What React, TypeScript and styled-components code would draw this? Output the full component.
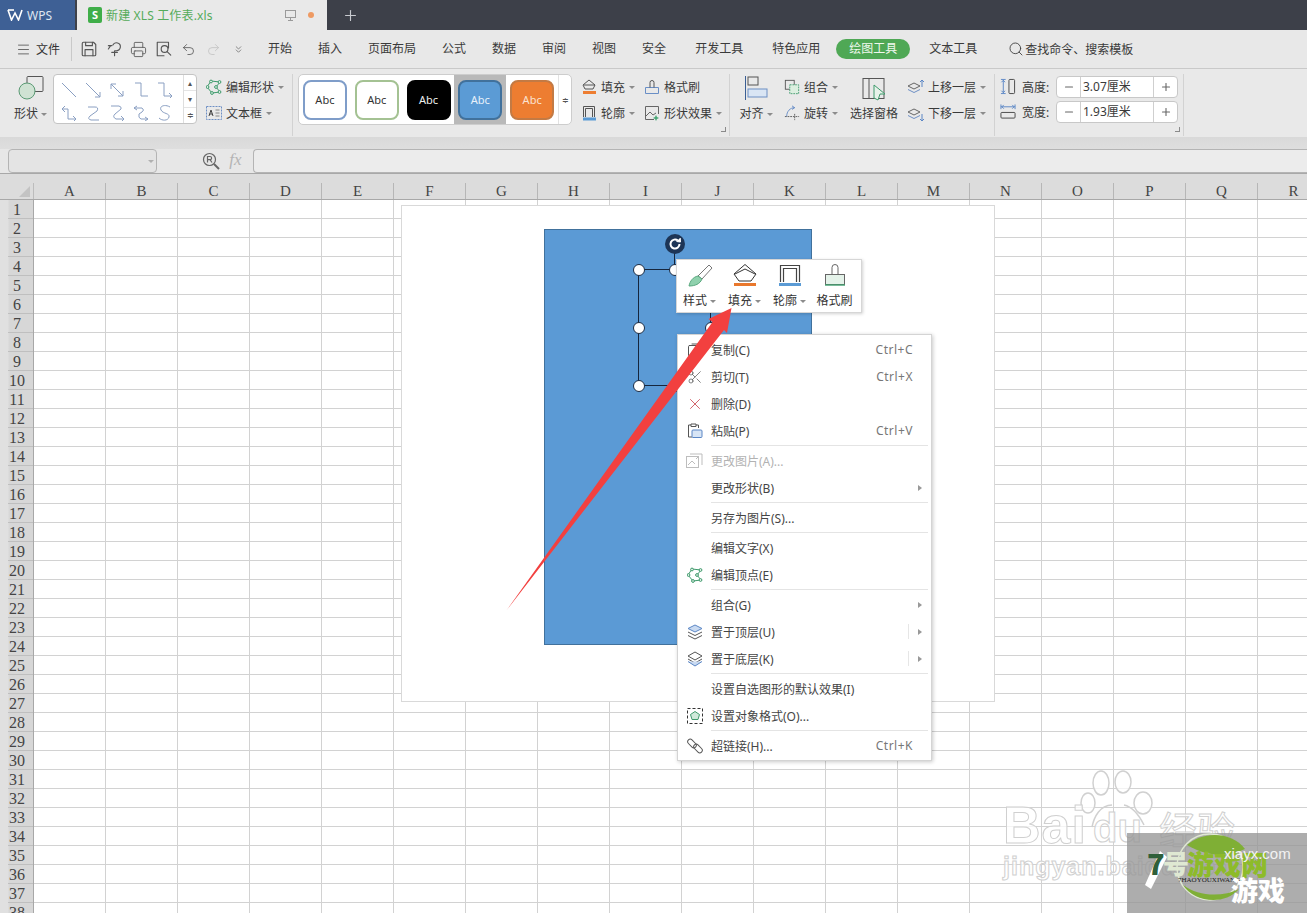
import React from "react";
import styled, { createGlobalStyle } from "styled-components";
import { Menu as MenuIcon, Plus, Minus, Printer, Undo2, Redo2, ChevronsDown, Search, Scissors, X } from "lucide-react";

const Global = createGlobalStyle`
  html, body { margin: 0; padding: 0; background: #fff; }
  body { font-family: "Noto Sans", "Noto Sans CJK SC", sans-serif; font-size: 12px; color: #3a3a3a; }
  * { box-sizing: border-box; }
  svg { flex: none; }
`;

const App0 = styled.div`
  width: 1307px; height: 913px; overflow: hidden; display: flex; flex-direction: column; position: relative;
`;

/* ---------- Title / tab bar ---------- */
const TabBar = styled.div`
  height: 30px; flex: none; background: #3d4049; display: flex; align-items: stretch;
`;
const WpsTab = styled.div`
  width: 75px; background: #3e6095; color: #dfe6f0; display: flex; align-items: center; gap: 4px; padding-left: 7px; font-size: 12px;
`;
const DocTab = styled.div`
  width: 250px; margin-left: 2px; background: #e9e9e9; display: flex; align-items: center; padding-left: 11px; position: relative;
`;
const SheetBadge = styled.span`
  width: 14px; height: 16px; border-radius: 2px; background: #3fae49; color: #fff; font-size: 11px; line-height: 16px; text-align: center; font-weight: 700; margin-right: 4px;
`;
const DocName = styled.span`
  color: #55ab5a; font-size: 12px; flex: 1; letter-spacing: 0.15px;
`;
const TabDot = styled.span`
  width: 6px; height: 6px; border-radius: 50%; background: #ee9a63; margin: 0 13px 0 11px;
`;
const NewTab = styled.div`
  margin-left: 15px; display: flex; align-items: center; color: #c9cbd0;
`;

/* ---------- Menu row ---------- */
const MenuRow = styled.div`
  height: 39px; flex: none; background: #e8e8e8; border-bottom: 1px solid #c9c9c9; display: flex; align-items: center; padding-left: 16px;
`;
const FileBtn = styled.div`
  display: flex; align-items: center; gap: 5px; width: 55px; height: 38px; font-size: 12px; color: #333;
`;
const MenuDivider = styled.div`
  width: 1px; height: 24px; background: #c9c9c9; margin-right: 4px;
`;
const QuickSlot = styled.div<{ $dim?: boolean }>`
  width: 25px; display: flex; justify-content: center; align-items: center; color: ${(p) => (p.$dim ? "#c2c2c2" : "#555")};
`;
const MenuTab = styled.div<{ $pad?: number }>`
  padding: 0 ${(p) => p.$pad ?? 13}px; color: #3a3a3a; font-size: 12px; line-height: 38px; white-space: nowrap;
`;
const ActiveTab = styled.div`
  margin-left: 3px; width: 74px; height: 20px; border-radius: 10px; background: #4fa855; color: #f0f8ee; font-size: 12px; line-height: 20px; text-align: center;
`;
const SearchBox = styled.div`
  display: flex; align-items: center; margin-left: 12px; gap: 1px; font-size: 12px; color: #3a3a3a;
`;
const QuickGap = styled.div`
  width: 4px;
`;

/* ---------- Ribbon ---------- */
const Ribbon = styled.div`
  height: 68px; flex: none; background: #e9e9e9; display: flex; padding: 5px 0 0 8px; align-items: flex-start;
`;
const BigBtn = styled.div<{ $w: number }>`
  width: ${(p) => p.$w}px; height: 52px; display: flex; flex-direction: column; align-items: center; color: #3a3a3a; flex: none;
`;
const BigIcon = styled.div`
  height: 29px; display: flex; align-items: flex-end; justify-content: center;
`;
const BigLabel = styled.div`
  display: flex; align-items: center; height: 24px; line-height: 24px; white-space: nowrap; margin-top: 1px;
`;
const Caret = styled.span`
  display: inline-block; width: 0; height: 0; border-left: 3px solid transparent; border-right: 3px solid transparent; border-top: 3px solid #8c8c8c; margin-left: 3px; flex: none;
`;
const CmdCaret = styled(Caret)`
  margin-left: 0;
`;
const Gallery = styled.div`
  width: 144px; height: 50px; background: #fff; border: 1px solid #c4c4c4; border-radius: 4px; display: flex; flex: none;
`;
const LineGrid = styled.div`
  flex: 1; display: grid; grid-template-columns: repeat(5, 24px); grid-auto-rows: 23px; padding: 3px 0 0 3px; justify-items: center; align-items: center;
`;
const ScrollCol = styled.div`
  width: 13px; border-left: 1px solid #dedede; display: flex; flex-direction: column; color: #555;
`;
const ScrollCell = styled.div`
  flex: 1; display: flex; align-items: center; justify-content: center; font-size: 8px; line-height: 1; border-bottom: 1px solid #e4e4e4;
  &:last-child { border-bottom: 0; }
`;
const Col = styled.div<{ $w: number; $pl?: number }>`
  width: ${(p) => p.$w}px; padding-left: ${(p) => p.$pl ?? 0}px; flex: none; display: flex; flex-direction: column;
`;
const CmdRow = styled.div`
  height: 26px; display: flex; align-items: center; gap: 4px; white-space: nowrap; color: #3a3a3a;
`;
const GroupDivider = styled.div`
  width: 1px; height: 62px; background: #d2d2d2; flex: none; position: relative;
`;
const Launcher = styled.span`
  position: absolute; left: -8px; top: 53px; width: 5px; height: 5px; border-right: 1px solid #8a8a8a; border-bottom: 1px solid #8a8a8a;
`;
const StyleGallery = styled.div`
  width: 274px; height: 51px; margin-left: 5px; background: #fff; border: 1px solid #cdcdcd; border-radius: 5px; display: flex; align-items: center; flex: none;
`;
const StyleSlot = styled.div<{ $on?: boolean }>`
  width: 52px; height: 49px; display: flex; align-items: center; justify-content: center; background: ${(p) => (p.$on ? "#b9b9b9" : "transparent")};
`;
const StyleChip = styled.div<{ $bg: string; $bd: string; $fg: string }>`
  width: 44px; height: 40px; border-radius: 8px; border: 2px solid ${(p) => p.$bd}; background: ${(p) => p.$bg}; color: ${(p) => p.$fg};
  font-size: 11px; line-height: 36px; text-align: center; font-family: "Noto Sans", sans-serif;
`;
const StyleScroll = styled.div`
  margin-left: auto; width: 13px; height: 49px; border-left: 1px solid #e2e2e2; display: flex; align-items: center; justify-content: center; color: #555; font-size: 8px;
`;
const SizeRow = styled.div`
  height: 25px; display: flex; align-items: center; color: #3a3a3a;
`;
const SizeLabel = styled.span`
  width: 40px; padding-left: 6px; white-space: nowrap;
`;
const Spinner = styled.div`
  width: 122px; height: 22px; background: #fff; border: 1px solid #c8c8c8; border-radius: 4px; display: flex; align-items: center;
`;
const SpinBtn = styled.div`
  width: 23px; height: 100%; display: flex; align-items: center; justify-content: center; color: #666;
`;
const SpinVal = styled.div`
  flex: 1; height: 100%; border-left: 1px solid #cfcfcf; border-right: 1px solid #cfcfcf; padding-left: 2px; line-height: 20px; color: #3a3a3a;
`;

/* ---------- Strip + formula bar ---------- */
const Strip = styled.div`
  height: 13px; flex: none; background: linear-gradient(#d9d9d9, #dedede); border-bottom: 1px solid #a9a9a9;
`;
const FormulaBar = styled.div`
  height: 24px; flex: none; background: #e7e7e7; display: flex; align-items: stretch; padding-left: 8px; margin-top: -1px; position: relative;
`;
const NameBox = styled.div`
  width: 149px; background: #e4e4e4; border: 1px solid #b4b4b4; border-radius: 4px; position: relative;
`;
const NameCaret = styled(Caret)`
  position: absolute; right: 2px; top: 10px; border-top-color: #b0b0b0;
`;
const ZoomSlot = styled.div`
  width: 22px; margin-left: 43px; display: flex; align-items: center; justify-content: center; color: #666;
`;
const Fx = styled.div`
  width: 31px; padding-right: 4px; text-align: center; font-family: "Liberation Serif", serif; font-style: italic; font-size: 17px; line-height: 22px; color: #b4b4b4;
`;
const FormulaInput = styled.div`
  flex: 1; background: #ececec; border: 1px solid #b4b4b4; border-right: 0; border-radius: 4px 0 0 4px;
`;

/* ---------- Sheet ---------- */
const Sheet = styled.div`
  flex: 1; position: relative; overflow: hidden; background: #fff; display: flex; flex-direction: column;
`;
const ColHead = styled.div`
  height: 27px; flex: none; display: flex; background: #dcdcdc; border-bottom: 1px solid #a8a8a8; border-top: 1px solid #a8a8a8; position: relative; align-items: flex-end;
`;
const Corner = styled.div`
  width: 34px; height: 16px; position: relative; flex: none; border-right: 1px solid #bcbcbc;
  &::after { content: ""; position: absolute; right: 3px; bottom: 2px; border-left: 11px solid transparent; border-bottom: 11px solid #c3c3c3; }
`;
const ColCell = styled.div`
  width: 72px; height: 16px; flex: none; border-right: 1px solid #b6b6b6; text-align: center; font-family: "Liberation Serif", serif; font-size: 15px; line-height: 16px; color: #444;
`;
const Body = styled.div`
  flex: 1; display: flex;
`;
const RowHead = styled.div`
  width: 34px; flex: none; background: linear-gradient(90deg, #e0e0e0 0, #e0e0e0 8px, #d7d7d7 9px); border-right: 1px solid #a8a8a8;
`;
const RowCell = styled.div`
  height: 19px; margin-left: 8px; padding-right: 7px; border-bottom: 1px solid #bfbfbf; font-family: "Liberation Serif", serif; font-size: 16px; line-height: 19px; text-align: center; color: #444;
`;
const Cells = styled.div`
  flex: 1;
  background-image:
    repeating-linear-gradient(90deg, transparent 0 71px, #d2d2d2 71px 72px),
    repeating-linear-gradient(180deg, transparent 0 18px, #d2d2d2 18px 19px);
`;

/* ---------- Free canvas: slide, shape, handles ---------- */
const Canvas = styled.div`
  position: absolute; left: 401px; top: 32px; width: 594px; height: 497px; background: #fff; border: 1px solid #d9d9d9;
`;
const BlueShape = styled.div`
  position: absolute; left: 142px; top: 23px; width: 268px; height: 416px; background: #5b9ad5; border: 1px solid #41719c;
`;
const Selection = styled.div`
  position: absolute; left: 93px; top: 39px; width: 73px; height: 117px; border: 1px solid #16263d;
`;
const Handle = styled.span<{ $x: number; $y: number }>`
  position: absolute; left: ${(p) => p.$x}px; top: ${(p) => p.$y}px; width: 12px; height: 12px; margin: -6px 0 0 -6px; border-radius: 50%; background: #fff; border: 1px solid #1b2c44;
`;
const RotStem = styled.span`
  position: absolute; left: 35px; top: -20px; width: 1px; height: 20px; background: #16263d;
`;
const RotHandle = styled.span`
  position: absolute; left: 26px; top: -36px; width: 20px; height: 20px; border-radius: 50%; background: #1d3556; display: flex; align-items: center; justify-content: center;
`;

/* ---------- Mini toolbar ---------- */
const MiniBar = styled.div`
  position: absolute; left: 676px; top: 86px; width: 186px; height: 54px; background: #fff; border: 1px solid #d6d6d6; box-shadow: 1px 1px 3px rgba(0,0,0,.18); display: flex;
`;
const MiniBtn = styled.div`
  width: 45px; display: flex; flex-direction: column; align-items: center; padding-top: 4px; color: #333; white-space: nowrap;
`;
const MiniLabel = styled.div`
  display: flex; align-items: center; height: 18px; margin-top: 4px; line-height: 18px;
`;

/* ---------- Context menu ---------- */
const ContextMenu = styled.div`
  position: absolute; left: 677px; top: 161px; width: 255px; height: 427px; background: #fff; border: 1px solid #d4d4d4; box-shadow: 1px 1px 4px rgba(0,0,0,.22); padding: 1px 0;
`;
const Item = styled.div<{ $off?: boolean }>`
  height: 27px; display: flex; align-items: center; color: ${(p) => (p.$off ? "#b2b2b2" : "#454545")}; position: relative; white-space: nowrap;
`;
const ItemIcon = styled.div`
  width: 33px; flex: none; display: flex; justify-content: center;
`;
const Shortcut = styled.span`
  position: absolute; right: 18px; color: #777; font-family: "Noto Sans", sans-serif; font-size: 12px; letter-spacing: 0.5px;
`;
const SubArrow = styled.span`
  position: absolute; right: 9px; top: 11px; border-top: 3px solid transparent; border-bottom: 3px solid transparent; border-left: 4px solid #999;
`;
const SplitLine = styled.span`
  position: absolute; right: 22px; top: 6px; width: 1px; height: 15px; background: #e6e6e6;
`;
const Sep = styled.div`
  height: 1px; margin: 1px 3px 1px 33px; background: #e4e4e4;
`;

/* ---------- Overlays ---------- */
const ArrowSvg = styled.svg`
  position: absolute; left: 500px; top: 127px;
`;
const Baidu = styled.div`
  position: absolute; left: 1003px; top: 600px; width: 240px; height: 140px; font-family: "Liberation Sans", sans-serif; color: rgba(255,255,255,.75); -webkit-text-stroke: 1px #d0d0d0;
`;
const BaiduWord = styled.span`
  position: absolute; left: 0; top: 22px; font-size: 52px; font-weight: 700; line-height: 60px; letter-spacing: 1px;
`;
const BaiduDu = styled.span`
  position: absolute; left: 90px; top: 30px; font-size: 40px; font-weight: 700; line-height: 50px;
`;
const BaiduCn = styled.span`
  position: absolute; left: 156px; top: 30px; font-family: "Noto Sans CJK SC", sans-serif; font-size: 38px; line-height: 50px; white-space: nowrap;
`;
const BaiduSub = styled.span`
  position: absolute; left: 0; top: 78px; font-size: 25px; line-height: 30px; font-weight: 700; white-space: nowrap; letter-spacing: 1px;
`;
const BaiduPaw = styled.svg`
  position: absolute; left: 73px; top: -4px;
`;
const Stamp = styled.div`
  position: absolute; left: 1127px; top: 660px; width: 180px; height: 80px; background: rgba(150,150,150,.78); overflow: hidden; font-family: "Noto Sans CJK SC", sans-serif;
`;
const StampArt = styled.svg`
  position: absolute; left: 0; top: 0;
`;
const Stamp7 = styled.span`
  position: absolute; left: 20px; top: 12px; font-size: 29px; line-height: 34px; font-weight: 900; color: #2f5f3a; white-space: nowrap;
`;
const StampHao = styled.span`
  position: absolute; left: 36px; top: 14px; font-size: 26px; line-height: 32px; font-weight: 900; color: #dfe8d2; white-space: nowrap;
`;
const StampGreen = styled.span`
  position: absolute; left: 60px; top: 16px; font-size: 27px; line-height: 30px; font-weight: 900; color: #8dbb2a; white-space: nowrap;
`;
const StampUrl = styled.span`
  position: absolute; left: 97px; top: 12px; font-family: "Liberation Sans", sans-serif; font-size: 15px; line-height: 18px; color: #f2f2f2; white-space: nowrap;
`;
const StampTiny = styled.span`
  position: absolute; left: 51px; top: 43px; font-family: "Liberation Serif", serif; font-size: 7px; line-height: 8px; color: #222; white-space: nowrap;
`;
const StampWhite = styled.span`
  position: absolute; left: 104px; top: 41px; font-size: 27px; line-height: 32px; font-weight: 900; color: #fff; white-space: nowrap;
`;

/* ---------- Icons (drawings) ---------- */
type S = { s?: number; children: React.ReactNode };
const Ic = ({ s = 16, children }: S) => (
  <svg width={s} height={s} viewBox="0 0 16 16" fill="none" stroke="#555" strokeWidth={1} strokeLinecap="round" strokeLinejoin="round">{children}</svg>
);
const WpsLogo = () => (
  <svg width="16" height="12" viewBox="0 0 16 12" fill="none" stroke="#fff" strokeWidth="1.6"><path d="M1 1l3.5 10L8 4l3.5 7L15 1" /><path d="M1 1h6" /></svg>
);
const Monitor = () => (
  <svg width="13" height="13" viewBox="0 0 13 13" fill="none" stroke="#9a9a9a"><rect x="1.5" y="1.5" width="10" height="7" /><path d="M6.5 8.5v3M4 11.5h5" /></svg>
);
const SaveI = () => <Ic s={18}><path d="M3 2h9l2 2v9a1 1 0 0 1-1 1H3a1 1 0 0 1-1-1V3a1 1 0 0 1 1-1z" /><path d="M5 2v3h6V2M4.500 14V8.500h7V14" /></Ic>;
const PasteQ = () => <Ic s={18}><path d="M7 4.500a3.500 3.500 0 1 1 3 5H8.500V14M3 5h3M3 8l2-3M6 11h5" /></Ic>;
const PreviewI = () => <Ic s={18}><path d="M12 7V2H2v12h6" /><circle cx="8.500" cy="8" r="3" /><path d="M11 10.500l3 3" /></Ic>;

const LG = ({ d }: { d: string }) => (
  <svg width="16" height="16" viewBox="0 0 16 16" fill="none" stroke="#8a9fc2" strokeWidth="1"><path d={d} /></svg>
);
const lineIcons = [
  "M1 1l14 14",
  "M1 1l14 14M15 10v5h-5",
  "M2 2l12 12M2 7V2h5M14 9v5H9",
  "M2 1h6v13h7",
  "M1 1h6v13h8M12 11l3 3-3 3",
  "M4 1L1 4h6v10h8M12 11l3 3-3 3M4 7L1 4",
  "M3 2h7q4 0 2 4L5 11q-3 3 1 4h8",
  "M2 1h8q3 1 2 3L6 9q-3 3 1 5h8M12 11l3 3-3 3",
  "M4 1L1 3l3 2M1 3h8q3 2 0 4L6 9q-1 4 2 5h7M12 12l3 2-3 2",
  "M13 2C8-1 2 1 4 5s9 3 8 7-7 4-10 1",
];

const ShapeI = () => (
  <svg width="28" height="26" viewBox="0 0 28 26" fill="none">
    <rect x="10" y="1.500" width="16" height="15" rx="1" stroke="#555" />
    <circle cx="10" cy="16" r="8" fill="#cfe2d3" stroke="#5a9a74" />
  </svg>
);
const EditShapeI = ({ s = 16 }: { s?: number }) => (
  <svg width={s} height={s} viewBox="0 0 16 16" fill="none" stroke="#3f9a6c"><path d="M5 2l9 1-4 5 4 5-8 1-5-6z" /><g fill="#e9f5ee"><circle cx="5" cy="2.500" r="1.400" /><circle cx="13.500" cy="3" r="1.400" /><circle cx="10" cy="8" r="1.400" /><circle cx="13.500" cy="13" r="1.400" /><circle cx="6" cy="14" r="1.400" /><circle cx="1.500" cy="8" r="1.400" /></g></svg>
);
const TextBoxI = () => (
  <svg width="16" height="16" viewBox="0 0 16 16" fill="none" stroke="#6d8fc4"><rect x=".5" y="1.500" width="15" height="13" strokeDasharray="2 1" /><path d="M3 11l2-6 2 6M3.700 9h2.600" stroke="#444" /><path d="M9.500 5h4M9.500 8h4M9.500 11h4" stroke="#888" /></svg>
);
const FillI = () => <svg width="16" height="16" viewBox="0 0 16 16" fill="none" stroke="#555"><path d="M8 1l6 5-2 4H4L2 6z" /><path d="M3 6h11" /><rect x="2" y="12" width="13" height="3" fill="#ed7d31" stroke="none" /></svg>;
const OutlineI = () => <svg width="16" height="16" viewBox="0 0 16 16" fill="none" stroke="#555"><path d="M2.500 12V1.500h11V12M4.500 12V3.500h7V12" /><rect x="2" y="12.500" width="13" height="3" fill="#5b9bd5" stroke="none" /></svg>;
const PainterI = () => <svg width="16" height="16" viewBox="0 0 16 16" fill="none" stroke="#6a8fc6"><path d="M1.500 8.500h13v6h-13z" /><path d="M6 8.500v-5a2 2 0 0 1 4 0v5" stroke="#555" /></svg>;
const EffectI = () => <svg width="16" height="16" viewBox="0 0 16 16" fill="none" stroke="#666"><path d="M10 14.500H1.500v-13h13V9" /><path d="M2 11l4-4 3 3 3-2" /><path d="M12 10l1 2 2 1-2 1-1 2-1-2-2-1 2-1z" fill="#4aa877" stroke="none" /></svg>;
const GroupI = () => <svg width="16" height="16" viewBox="0 0 18 18" fill="none" stroke="#555"><rect x="1.500" y="1.500" width="10" height="10" /><rect x="6.500" y="6.500" width="10" height="10" fill="#dcefe0" stroke="#3f9a6c" strokeDasharray="2 1" /></svg>;
const RotateI = () => <svg width="16" height="16" viewBox="0 0 18 18" fill="none" stroke="#5f87c4"><path d="M3 13C3 7 7 3 12 3M9 1l3 2-3 2" /><path d="M1 13h16M12 10v7" stroke="#555" strokeDasharray="2 1" /></svg>;
const AlignI = () => <svg width="24" height="26" viewBox="0 0 24 26" fill="none" stroke="#555"><path d="M1.500 1v24" stroke="#3b5f94" /><rect x="4" y="2" width="10" height="8" /><rect x="4" y="14" width="19" height="8" fill="#d9e5f4" stroke="#6d8fc4" /></svg>;
const PaneI = () => <svg width="25" height="24" viewBox="0 0 25 24" fill="none" stroke="#555"><rect x="1" y="1.500" width="21" height="20" /><path d="M7 1.500v20" /><path d="M12 8l11 9h-5l-2 6-4-2z" fill="#e7f2ea" stroke="#3f9a6c" /></svg>;
const LayerI = ({ up }: { up?: boolean }) => (
  <svg width="17" height="17" viewBox="0 0 17 17" fill="none" stroke="#666"><path d="M1 7l6-3 6 3-6 3z" /><path d="M1 10.500l6 3 6-3" stroke="#6d8fc4" />{up ? <path d="M15 8V1M13 3l2-2 2 2" stroke="#5b86c5" /> : <path d="M15 9v7M13 14l2 2 2-2" stroke="#5b86c5" />}</svg>
);
const HeightI = () => <svg width="16" height="17" viewBox="0 0 17 17" fill="none"><path d="M3.500 1.500v14M1 1h5M1 16h5M1.500 4l2-2 2 2M1.500 13l2 2 2-2" stroke="#5b86c5" /><rect x="9.500" y="1" width="6" height="15" rx="1" stroke="#444" /></svg>;
const WidthI = () => <svg width="16" height="17" viewBox="0 0 17 17" fill="none"><path d="M1 3.500h15M1 1v5M16 1v5M4 1.500l-2 2 2 2M13 1.500l2 2-2 2" stroke="#5b86c5" /><rect x="1" y="9.500" width="15" height="6" rx="1" stroke="#444" /></svg>;
const FindZoom = () => <svg width="18" height="18" viewBox="0 0 18 18" fill="none" stroke="#666" strokeWidth="1.200"><circle cx="7.500" cy="7.500" r="6" /><path d="M12 12l5 5" strokeWidth="2" /><path d="M5.500 10.500v-6h2.500a1.600 1.600 0 0 1 0 3.200H5.500M8 7.700l2 2.800" /></svg>;

/* mini toolbar */
const BrushBig = () => <svg width="28" height="24" viewBox="0 0 28 24" fill="none"><path d="M23 1l3 3-10 11-4-3z" stroke="#777" fill="#fff" /><path d="M12 12c-5 1-8 5-9 10 6 0 11-2 13-7z" fill="#8fd1ad" stroke="#59a87e" /></svg>;
const FillBig = () => <svg width="26" height="24" viewBox="0 0 26 24" fill="none" stroke="#333"><path d="M13 .5L24 10l-5 7H7l-5-7z" /><path d="M3 10l10-5 10 5" /><rect x="2" y="19" width="22" height="3" fill="#e9782d" stroke="none" /></svg>;
const OutlineBig = () => <svg width="26" height="24" viewBox="0 0 26 24" fill="none" stroke="#444" strokeWidth="1.200"><path d="M3.500 18V1.500h19V18M6.500 18V4.500h13V18" /><rect x="2" y="19" width="22" height="3" fill="#5b9bd5" stroke="none" /></svg>;
const PainterBig = () => <svg width="24" height="24" viewBox="0 0 24 24" fill="none"><rect x="2.500" y="10.500" width="19" height="10" fill="#e4f2e9" stroke="#666" /><path d="M9 10.500v-7a3 3 0 0 1 6 0v7" stroke="#666" /><path d="M2 21h20" stroke="#3fa06f" strokeWidth="1.400" /></svg>;

/* context menu */
const CopyI = () => <Ic><rect x="1.500" y="3.500" width="9" height="11" rx="1" /><path d="M5 2h7l2 2v9" /></Ic>;
const PasteI = () => <svg width="16" height="16" viewBox="0 0 16 16" fill="none" stroke="#555"><path d="M4 2H1.500v12H5M9 2h2.500v3M4 1h5v2.500H4z" /><rect x="5" y="7" width="10" height="7.500" rx="1" fill="#d8e5f5" stroke="#5b86c5" /></svg>;
const ChangePic = () => <svg width="17" height="17" viewBox="0 0 17 17" fill="none" stroke="#bdbdbd"><rect x=".5" y="4.500" width="12" height="11" /><path d="M4 2h12v11M2 13l4-4 3 3M10 7l3-3" /></svg>;
const LayerTop = () => <svg width="16" height="16" viewBox="0 0 16 16" fill="none" stroke="#555"><path d="M8 1l7 3.500L8 8 1 4.500z" fill="#c9daf1" stroke="#5b86c5" /><path d="M1 8l7 3.500L15 8M1 11.500L8 15l7-3.500" /></svg>;
const LayerBottom = () => <svg width="16" height="16" viewBox="0 0 16 16" fill="none" stroke="#555"><path d="M8 1l7 4-7 4-7-4z" /><path d="M1 8l7 4 7-4" /><path d="M1 10.500L8 15l7-4.500" stroke="#5b86c5" fill="#c9daf1" /></svg>;
const FormatI = () => <svg width="16" height="16" viewBox="0 0 16 16" fill="none"><rect x=".5" y=".5" width="15" height="15" stroke="#333" strokeDasharray="3 2" /><path d="M8 3.500l4.500 3-1.500 5H5l-1.500-5z" fill="#cfe9da" stroke="#3f9a6c" /></svg>;
const LinkI = () => <svg width="16" height="16" viewBox="0 0 16 16" fill="none" stroke="#555"><rect x="0" y="3" width="10" height="5" rx="2.500" transform="rotate(45 5 5.500)" /><rect x="6" y="8" width="10" height="5" rx="2.500" transform="rotate(45 11 10.500)" /></svg>;
const RotateMark = () => <svg width="14" height="14" viewBox="0 0 14 14" fill="none" stroke="#fff" strokeWidth="2"><path d="M11.500 7a4.500 4.500 0 1 1-1.600-3.400" /><path d="M8.500 4.500L12.500 5l-.3-4" fill="#fff" strokeWidth="1" /></svg>;

const cols = "ABCDEFGHIJKLMNOPQR".split("");
const rows = Array.from({ length: 38 }, (_, i) => i + 1);
const chips = [
  { bg: "#fff", bd: "#7f9dc9", fg: "#333" },
  { bg: "#fff", bd: "#a4c293", fg: "#333" },
  { bg: "#000", bd: "#000", fg: "#eee" },
  { bg: "#5b9bd5", bd: "#41719c", fg: "#e8f1fa", on: true },
  { bg: "#ed7d31", bd: "#c37a44", fg: "#fbe3d2" },
];

const Cmd = ({ icon, label, caret = true }: { icon: React.ReactNode; label: string; caret?: boolean }) => (
  <CmdRow>{icon}<span>{label}</span>{caret && <CmdCaret />}</CmdRow>
);

export default function App() {
  return (
    <App0>
      <Global />
      <TabBar>
        <WpsTab><WpsLogo /><span>WPS</span></WpsTab>
        <DocTab>
          <SheetBadge>S</SheetBadge>
          <DocName>新建 XLS 工作表.xls</DocName>
          <Monitor />
          <TabDot />
        </DocTab>
        <NewTab><Plus size={17} strokeWidth={1.6} /></NewTab>
      </TabBar>

      <MenuRow>
        <FileBtn><MenuIcon size={15} strokeWidth={1.1} /><span>文件</span></FileBtn>
        <MenuDivider />
        <QuickSlot><SaveI /></QuickSlot>
        <QuickSlot><PasteQ /></QuickSlot>
        <QuickSlot><Printer size={17} strokeWidth={1.2} /></QuickSlot>
        <QuickSlot><PreviewI /></QuickSlot>
        <QuickSlot><Undo2 size={15} strokeWidth={1.3} /></QuickSlot>
        <QuickSlot $dim><Redo2 size={15} strokeWidth={1.3} /></QuickSlot>
        <QuickSlot><ChevronsDown size={11} strokeWidth={1.4} /></QuickSlot>
        <QuickGap />
        <MenuTab>开始</MenuTab>
        <MenuTab>插入</MenuTab>
        <MenuTab>页面布局</MenuTab>
        <MenuTab>公式</MenuTab>
        <MenuTab>数据</MenuTab>
        <MenuTab>审阅</MenuTab>
        <MenuTab>视图</MenuTab>
        <MenuTab>安全</MenuTab>
        <MenuTab $pad={16}>开发工具</MenuTab>
        <MenuTab>特色应用</MenuTab>
        <ActiveTab>绘图工具</ActiveTab>
        <MenuTab $pad={19}>文本工具</MenuTab>
        <SearchBox><Search size={16} strokeWidth={1.3} /><span>查找命令、搜索模板</span></SearchBox>
      </MenuRow>

      <Ribbon>
        <BigBtn $w={45}>
          <BigIcon><ShapeI /></BigIcon>
          <BigLabel>形状<Caret /></BigLabel>
        </BigBtn>
        <Gallery>
          <LineGrid>{lineIcons.map((d) => <LG key={d} d={d} />)}</LineGrid>
          <ScrollCol>
            <ScrollCell>▴</ScrollCell><ScrollCell>▾</ScrollCell><ScrollCell>≑</ScrollCell>
          </ScrollCol>
        </Gallery>
        <Col $w={95} $pl={9}>
          <Cmd icon={<EditShapeI />} label="编辑形状" />
          <Cmd icon={<TextBoxI />} label="文本框" />
        </Col>
        <GroupDivider />
        <StyleGallery>
          {chips.map((c) => (
            <StyleSlot key={c.bg + c.bd} $on={c.on}><StyleChip $bg={c.bg} $bd={c.bd} $fg={c.fg}>Abc</StyleChip></StyleSlot>
          ))}
          <StyleScroll>≑</StyleScroll>
        </StyleGallery>
        <Col $w={68} $pl={9}>
          <Cmd icon={<FillI />} label="填充" />
          <Cmd icon={<OutlineI />} label="轮廓" />
        </Col>
        <Col $w={89} $pl={4}>
          <Cmd icon={<PainterI />} label="格式刷" caret={false} />
          <Cmd icon={<EffectI />} label="形状效果" />
        </Col>
        <GroupDivider><Launcher /></GroupDivider>
        <BigBtn $w={52}>
          <BigIcon><AlignI /></BigIcon>
          <BigLabel>对齐<Caret /></BigLabel>
        </BigBtn>
        <Col $w={63} $pl={2}>
          <Cmd icon={<GroupI />} label="组合" />
          <Cmd icon={<RotateI />} label="旋转" />
        </Col>
        <BigBtn $w={58}>
          <BigIcon><PaneI /></BigIcon>
          <BigLabel>选择窗格</BigLabel>
        </BigBtn>
        <Col $w={91} $pl={4}>
          <Cmd icon={<LayerI up />} label="上移一层" />
          <Cmd icon={<LayerI />} label="下移一层" />
        </Col>
        <GroupDivider />
        <Col $w={188} $pl={5}>
          <SizeRow><HeightI /><SizeLabel>高度:</SizeLabel><Spinner><SpinBtn><Minus size={12} strokeWidth={2.2} /></SpinBtn><SpinVal>3.07厘米</SpinVal><SpinBtn><Plus size={12} strokeWidth={2.2} /></SpinBtn></Spinner></SizeRow>
          <SizeRow><WidthI /><SizeLabel>宽度:</SizeLabel><Spinner><SpinBtn><Minus size={12} strokeWidth={2.2} /></SpinBtn><SpinVal>1.93厘米</SpinVal><SpinBtn><Plus size={12} strokeWidth={2.2} /></SpinBtn></Spinner></SizeRow>
        </Col>
        <GroupDivider><Launcher /></GroupDivider>
      </Ribbon>

      <Strip />
      <FormulaBar>
        <NameBox><NameCaret /></NameBox>
        <ZoomSlot><FindZoom /></ZoomSlot>
        <Fx>fx</Fx>
        <FormulaInput />
      </FormulaBar>

      <Sheet>
        <ColHead>
          <Corner />
          {cols.map((c) => <ColCell key={c}>{c}</ColCell>)}
        </ColHead>
        <Body>
          <RowHead>{rows.map((r) => <RowCell key={r}>{r}</RowCell>)}</RowHead>
          <Cells />
        </Body>

        <Canvas>
          <BlueShape>
            <Selection>
              <RotStem />
              <RotHandle><RotateMark /></RotHandle>
              <Handle $x={0} $y={0} /><Handle $x={36} $y={0} /><Handle $x={72} $y={0} />
              <Handle $x={0} $y={58} /><Handle $x={72} $y={58} />
              <Handle $x={0} $y={116} /><Handle $x={36} $y={116} /><Handle $x={72} $y={116} />
            </Selection>
          </BlueShape>
        </Canvas>

        <Baidu>
          <BaiduPaw width="90" height="80" viewBox="0 0 90 80" fill="none" stroke="#d0d0d0" strokeWidth="1.500">
            <ellipse cx="25" cy="14" rx="8" ry="12" fill="rgba(255,255,255,.7)" />
            <ellipse cx="47" cy="13" rx="8" ry="11" fill="rgba(255,255,255,.7)" />
            <ellipse cx="12" cy="34" rx="7" ry="10" fill="rgba(255,255,255,.7)" />
            <ellipse cx="67" cy="34" rx="9" ry="11" fill="rgba(255,255,255,.7)" />
            <path d="M36 36C24 36 18 48 16 58M48 36c10 2 16 12 20 20" />
          </BaiduPaw>
          <BaiduWord>Bai</BaiduWord>
          <BaiduDu>du</BaiduDu>
          <BaiduCn>经验</BaiduCn>
          <BaiduSub>jingyan.baidu.com</BaiduSub>
        </Baidu>

        <Stamp>
          <StampArt width="180" height="80" viewBox="0 0 180 80" fill="none">
            <circle cx="83" cy="34" r="33" stroke="#dfe8d2" strokeWidth="1.500" />
            <path d="M60 12C75-2 105-2 118 16 100 24 80 24 60 12z" fill="#7faf35" />
            <path d="M56 52C66 68 96 74 112 56 96 64 72 64 56 52z" fill="#7faf35" />
            <path d="M33 18L18 52l6 4L40 24z" fill="#fff" />
          </StampArt>
          <Stamp7>7</Stamp7>
          <StampHao>号</StampHao>
          <StampGreen>游戏网</StampGreen>
          <StampUrl>xiayx.com</StampUrl>
          <StampTiny>7HAOYOUXIWANG</StampTiny>
          <StampWhite>游戏</StampWhite>
        </Stamp>

        <MiniBar>
          <MiniBtn><BrushBig /><MiniLabel>样式<Caret /></MiniLabel></MiniBtn>
          <MiniBtn><FillBig /><MiniLabel>填充<Caret /></MiniLabel></MiniBtn>
          <MiniBtn><OutlineBig /><MiniLabel>轮廓<Caret /></MiniLabel></MiniBtn>
          <MiniBtn><PainterBig /><MiniLabel>格式刷</MiniLabel></MiniBtn>
        </MiniBar>

        <ContextMenu>
          <Item><ItemIcon><CopyI /></ItemIcon>复制(C)<Shortcut>Ctrl+C</Shortcut></Item>
          <Item><ItemIcon><Scissors size={16} strokeWidth={1} color="#444" /></ItemIcon>剪切(T)<Shortcut>Ctrl+X</Shortcut></Item>
          <Item><ItemIcon><X size={18} strokeWidth={1.1} color="#c9444c" /></ItemIcon>删除(D)</Item>
          <Item><ItemIcon><PasteI /></ItemIcon>粘贴(P)<Shortcut>Ctrl+V</Shortcut></Item>
          <Sep />
          <Item $off><ItemIcon><ChangePic /></ItemIcon>更改图片(A)...</Item>
          <Item><ItemIcon />更改形状(B)<SubArrow /></Item>
          <Sep />
          <Item><ItemIcon />另存为图片(S)...</Item>
          <Sep />
          <Item><ItemIcon />编辑文字(X)</Item>
          <Item><ItemIcon><EditShapeI /></ItemIcon>编辑顶点(E)</Item>
          <Sep />
          <Item><ItemIcon />组合(G)<SubArrow /></Item>
          <Item><ItemIcon><LayerTop /></ItemIcon>置于顶层(U)<SplitLine /><SubArrow /></Item>
          <Item><ItemIcon><LayerBottom /></ItemIcon>置于底层(K)<SplitLine /><SubArrow /></Item>
          <Sep />
          <Item><ItemIcon />设置自选图形的默认效果(I)</Item>
          <Item><ItemIcon><FormatI /></ItemIcon>设置对象格式(O)...</Item>
          <Sep />
          <Item><ItemIcon><LinkI /></ItemIcon>超链接(H)...<Shortcut>Ctrl+K</Shortcut></Item>
        </ContextMenu>

        <ArrowSvg width="240" height="320" viewBox="500 300 240 320">
          <polygon points="506,611 712.500,322 708.500,319 731.500,308 727,333 724,330" fill="#f2403f" />
        </ArrowSvg>
      </Sheet>
    </App0>
  );
}
